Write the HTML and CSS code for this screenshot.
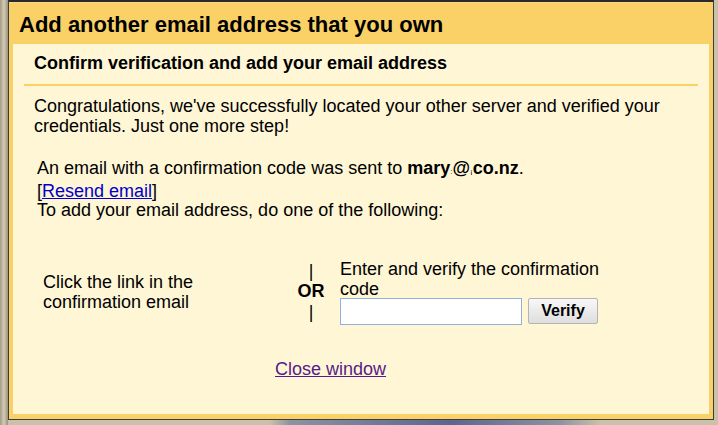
FILE: index.html
```html
<!DOCTYPE html>
<html>
<head>
<meta charset="utf-8">
<link rel="stylesheet" href="styles.css">
</head>
<body>
<div class="window">
  <div class="titlebar">Add another email address that you own</div>
  <div class="content">
    <div class="subhead">Confirm verification and add your email address</div>
    <p class="intro">Congratulations, we've successfully located your other server and verified your credentials. Just one more step!</p>
    <div class="sent">
      An email with a confirmation code was sent to <b>mary<span class="redact">:</span>@<span class="redact">¡</span>co.nz</b>.<br>
      [<a href="#" class="link">Resend email</a>]<br>
      To add your email address, do one of the following:
    </div>
    <div class="options">
      <div class="opt-left"><div class="opt-text">Click the link in the confirmation email</div></div>
      <div class="or"><span>|</span><b>OR</b><span>|</span></div>
      <div class="opt-right">
        <div>Enter and verify the confirmation code</div>
        <div class="form"><input class="code" type="text"><button class="verify">Verify</button></div>
      </div>
    </div>
    <div class="close"><a href="#" class="visited">Close window</a></div>
  </div>
</div>
</body>
</html>
```
FILE: styles.css
```css
html, body {
  margin: 0;
  padding: 0;
}
body {
  width: 718px;
  height: 425px;
  overflow: hidden;
  background:
    linear-gradient(90deg, #a59c86 0px, #d3cbb5 4px, #9a927c 8px, transparent 8px),
    linear-gradient(90deg, #c9c1a9 0px, #c9c1a9 270px, #8b93a3 290px, #5a6690 450px, #8b93a3 560px, #c9c1a9 600px);
  font-family: "Liberation Sans", Arial, sans-serif;
  font-size: 18px;
  color: #000;
}
.window {
  margin-left: 8px;
  width: 700px;
  height: 412px;
  border: 1px solid #3c3c3c;
  border-top: 2px solid #2a2a2a;
  background: #f9d166;
  padding: 0 4px 5px 0;
  display: flex;
  flex-direction: column;
}
.titlebar {
  height: 42px;
  line-height: 44px;
  padding-left: 10px;
  font-size: 22px;
  font-weight: bold;
  box-sizing: border-box;
  border-top: 1px solid #fbd97e;
}
.content {
  margin-left: 4px;
  flex: 1;
  background: #fff6d6;
}
.subhead {
  margin: 0 11px;
  padding: 9px 0 11px 10px;
  line-height: 20px;
  font-weight: bold;
  font-size: 18px;
  border-bottom: 2px solid #f9d166;
}
.intro {
  margin: 10px 0 0 21px;
  line-height: 20px;
}
.sent {
  margin: 23px 0 0 24px;
  line-height: 19.5px;
}
.redact {
  font-size: 8px;
  font-weight: normal;
}
.link {
  color: #0000cc;
}
.visited {
  color: #551a8b;
}
.options {
  margin-top: 38px;
  padding-left: 30px;
  display: flex;
  align-items: center;
}
.opt-left {
  width: 250px;
  line-height: 20px;
}
.opt-text {
  width: 200px;
}
.or {
  width: 36px;
  display: flex;
  flex-direction: column;
  align-items: center;
  line-height: 20.5px;
}
.opt-right {
  margin-left: 11px;
  width: 270px;
  line-height: 20px;
}
.form {
  display: flex;
  align-items: center;
  margin-top: -1px;
}
.code {
  width: 182px;
  height: 27px;
  box-sizing: border-box;
  border: 1px solid #8fb0e0;
  background: #fff;
  margin: 0;
  padding: 2px 4px;
}
.verify {
  margin-left: 6px;
  width: 70px;
  height: 26px;
  border: 1px solid #b4b4b4;
  border-radius: 2px;
  background: linear-gradient(#f8f8f8, #dedede);
  font-family: "Liberation Sans", Arial, sans-serif;
  font-weight: bold;
  font-size: 16px;
  padding: 0;
}
.close {
  margin-top: 34px;
  padding-left: 262px;
  line-height: 20px;
}
```
